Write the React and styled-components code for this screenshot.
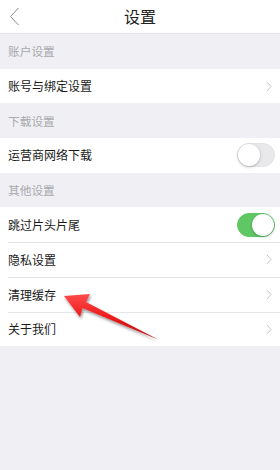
import React from "react";
import styled, { createGlobalStyle } from "styled-components";

const Global = createGlobalStyle`
  html, body { margin: 0; padding: 0; background: #efeff4; }
  body { font-family: "Noto Sans CJK SC", "Liberation Sans", sans-serif; }
`;

const Page = styled.div`
  position: relative;
  width: 280px;
  height: 470px;
  background: #efeff4;
  overflow: hidden;
`;

const Header = styled.div`
  height: 34px;
  background: #fff;
  border-bottom: 1px solid #e4e4e8;
  box-sizing: border-box;
  display: grid;
  grid-template-columns: 40px 1fr 40px;
  align-items: center;
`;

const Back = styled.div`
  display: flex;
  align-items: center;
  padding-left: 9px;
`;

const Title = styled.div`
  text-align: center;
  font-size: 16px;
  color: #222;
  line-height: 1;
  padding-bottom: 1px;
`;

const SectionLabel = styled.div`
  height: 34.7px;
  display: flex;
  align-items: center;
  padding-left: 8px;
  font-size: 11.7px;
  color: #a9a9ae;
  line-height: 1;
`;

const Group = styled.div`
  background: #fff;
  padding-left: 8px;
`;

const Row = styled.div`
  height: 34.7px;
  box-sizing: border-box;
  display: flex;
  align-items: center;
  justify-content: space-between;
  padding-right: ${(p) => (p.$toggle ? "5px" : "8px")};
  border-top: ${(p) => (p.$first ? "none" : "1px solid #e6e6ea")};
  font-size: 12px;
  line-height: 1;
  color: #1a1a1a;
`;

const Toggle = styled.div`
  position: relative;
  width: 38px;
  height: 24px;
  border-radius: 12px;
  box-sizing: border-box;
  background: ${(p) => (p.$on ? "#5fc865" : "#e9e9ec")};
  border: 1px solid ${(p) => (p.$on ? "#5fc865" : "#e3e3e6")};
  &::after {
    content: "";
    position: absolute;
    top: 0;
    ${(p) => (p.$on ? "right: 0;" : "left: 0;")}
    width: 22px;
    height: 22px;
    border-radius: 50%;
    background: #fff;
    box-shadow: 0 1px 3px rgba(0, 0, 0, 0.25);
  }
`;

const Arrow = styled.svg`
  position: absolute;
  left: 0;
  top: 0;
  pointer-events: none;
`;

const Chevron = () => (
  <svg width="6" height="11" viewBox="0 0 6 11">
    <path d="M0.8 0.8 L5 5.5 L0.8 10.2" fill="none" stroke="#c4c4c8" strokeWidth="1" />
  </svg>
);

const BackIcon = () => (
  <svg width="11" height="19" viewBox="0 0 11 19">
    <path d="M9.5 1 L1.5 9.5 L9.5 18" fill="none" stroke="#8a8a8e" strokeWidth="1" />
  </svg>
);

export default function App() {
  return (
    <>
      <Global />
      <Page>
        <Header>
          <Back>
            <BackIcon />
          </Back>
          <Title>设置</Title>
          <div />
        </Header>
        <SectionLabel>账户设置</SectionLabel>
        <Group>
          <Row $first>
            <span>账号与绑定设置</span>
            <Chevron />
          </Row>
        </Group>
        <SectionLabel>下载设置</SectionLabel>
        <Group>
          <Row $first $toggle>
            <span>运营商网络下载</span>
            <Toggle />
          </Row>
        </Group>
        <SectionLabel>其他设置</SectionLabel>
        <Group>
          <Row $first $toggle>
            <span>跳过片头片尾</span>
            <Toggle $on />
          </Row>
          <Row>
            <span>隐私设置</span>
            <Chevron />
          </Row>
          <Row>
            <span>清理缓存</span>
            <Chevron />
          </Row>
          <Row>
            <span>关于我们</span>
            <Chevron />
          </Row>
        </Group>
        <Arrow width="280" height="470" viewBox="0 0 280 470">
          <defs>
            <linearGradient id="rg" x1="0" y1="0" x2="0" y2="1">
              <stop offset="0" stopColor="#ff4a4a" />
              <stop offset="0.5" stopColor="#ee1c1c" />
              <stop offset="1" stopColor="#b80c0c" />
            </linearGradient>
            <filter id="sh" x="-20%" y="-20%" width="140%" height="140%">
              <feGaussianBlur in="SourceAlpha" stdDeviation="1.5" />
              <feOffset dx="1" dy="2" />
              <feComponentTransfer>
                <feFuncA type="linear" slope="0.45" />
              </feComponentTransfer>
              <feMerge>
                <feMergeNode />
                <feMergeNode in="SourceGraphic" />
              </feMerge>
            </filter>
          </defs>
          <polygon
            points="64,296 90,294 86,302 158,339.5 82.5,308 80,317"
            fill="url(#rg)"
            filter="url(#sh)"
          />
        </Arrow>
      </Page>
    </>
  );
}
